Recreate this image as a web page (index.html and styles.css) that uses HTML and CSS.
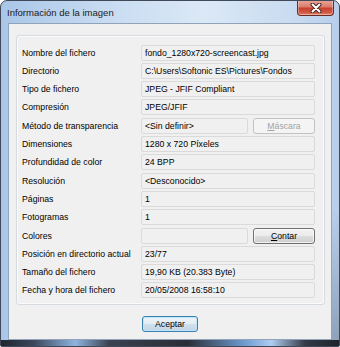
FILE: index.html
```html
<!DOCTYPE html>
<html lang="es">
<head>
<meta charset="utf-8">
<title>Información de la imagen</title>
<link rel="stylesheet" href="styles.css">
</head>
<body>
<div class="window">
  <div class="titlebar">
    <span class="title">Información de la imagen</span>
    <div class="close">
      <svg width="14" height="10" viewBox="0 0 14 10">
        <path d="M3.5 1.5 L10.5 8.5 M10.5 1.5 L3.5 8.5" stroke="#4a2a26" stroke-width="4" stroke-linecap="round"/>
        <path d="M3.5 1.5 L10.5 8.5 M10.5 1.5 L3.5 8.5" stroke="#ffffff" stroke-width="2" stroke-linecap="round"/>
      </svg>
    </div>
  </div>
  <div class="client">
    <div class="group">
      <div class="label">Nombre del fichero</div><div class="field">fondo_1280x720-screencast.jpg</div>
      <div class="label">Directorio</div><div class="field">C:\Users\Softonic ES\Pictures\Fondos</div>
      <div class="label">Tipo de fichero</div><div class="field">JPEG - JFIF Compliant</div>
      <div class="label">Compresión</div><div class="field">JPEG/JFIF</div>
      <div class="label">Método de transparencia</div>
      <div class="split"><div class="field">&lt;Sin definir&gt;</div><div class="btn disabled"><u>M</u>áscara</div></div>
      <div class="label">Dimensiones</div><div class="field">1280 x 720 Píxeles</div>
      <div class="label">Profundidad de color</div><div class="field">24 BPP</div>
      <div class="label">Resolución</div><div class="field">&lt;Desconocido&gt;</div>
      <div class="label">Páginas</div><div class="field">1</div>
      <div class="label">Fotogramas</div><div class="field">1</div>
      <div class="label">Colores</div>
      <div class="split"><div class="field"></div><div class="btn"><u>C</u>ontar</div></div>
      <div class="label">Posición en directorio actual</div><div class="field">23/77</div>
      <div class="label">Tamaño del fichero</div><div class="field">19,90 KB (20.383 Byte)</div>
      <div class="label">Fecha y hora del fichero</div><div class="field">20/05/2008 16:58:10</div>
    </div>
    <div class="footer"><div class="btn default">Aceptar</div></div>
  </div>
</div>
</body>
</html>
```

FILE: styles.css
```css
html, body {
  margin: 0;
  padding: 0;
  background: #ffffff;
}
.window {
  box-sizing: border-box;
  width: 340px;
  height: 347px;
  border: 1px solid #3f4957;
  border-radius: 7px 7px 2px 2px;
  background:
    linear-gradient(to right, #20242c 0%, #3c4a5e 10%, #8fb4e0 22%, #3a4250 32%, #2a2e36 55%, #6f9bd0 72%, #aecdf2 80%, #343a46 90%, #20242c 100%) bottom / 100% 6px no-repeat,
    linear-gradient(to bottom, rgba(255,255,255,0) 60%, rgba(60,70,90,0.35) 100%) right / 7px 100% no-repeat,
    linear-gradient(to right, #a9c6e8 0%, #c7dbf1 30%, #dbe8f6 60%, #cadcf1 85%, #b7cfec 100%);
  display: flex;
  flex-direction: column;
  font-family: "Liberation Sans", Arial, sans-serif;
  overflow: hidden;
}
.titlebar {
  height: 22px;
  display: flex;
  align-items: flex-start;
  justify-content: space-between;
}
.title {
  margin: 6px 0 0 6px;
  font-size: 9.5px;
  color: #1b1b1b;
}
.close {
  width: 37px;
  height: 16px;
  margin-right: 5px;
  margin-top: -1px;
  box-sizing: border-box;
  border: 1px solid #6d2a22;
  border-top: none;
  border-radius: 0 0 4px 4px;
  background: linear-gradient(to bottom, #e9a99a 0%, #dc7d6c 45%, #c7412f 55%, #d25a45 85%, #e08a70 100%);
  display: flex;
  align-items: center;
  justify-content: center;
  box-shadow: inset 0 0 0 1px rgba(255,255,255,0.35);
}
.client {
  flex: 1;
  margin: 0 7px 6px 7px;
  background: #f0f0f0;
  border: 1px solid #90a3b9;
  display: flex;
  flex-direction: column;
}
.group {
  margin: 11px 6px 0 7px;
  height: 270px;
  box-sizing: border-box;
  border: 1px solid #d5dbe0;
  border-radius: 3px;
  box-shadow: inset 0 0 0 1px #fbfbfb;
  padding: 8.6px 10px 0 5px;
  display: grid;
  grid-template-columns: 119px 174px;
  grid-auto-rows: 16px;
  row-gap: 2.3px;
  align-items: center;
  font-size: 8.7px;
  color: #000;
}
.label {
  white-space: nowrap;
}
.field {
  box-sizing: border-box;
  height: 16px;
  border: 1px solid #dadada;
  border-radius: 2px;
  padding: 0 3px;
  line-height: 14px;
  white-space: nowrap;
  overflow: hidden;
}
.split {
  display: flex;
  gap: 5px;
  height: 16px;
}
.split .field {
  width: 107px;
  flex: none;
}
.btn {
  box-sizing: border-box;
  flex: 1;
  height: 16px;
  border: 1px solid #707070;
  border-radius: 3px;
  background: linear-gradient(to bottom, #f2f2f2 0%, #ebebeb 50%, #dddddd 50%, #cfcfcf 100%);
  box-shadow: inset 0 0 0 1px rgba(255,255,255,0.7);
  text-align: center;
  line-height: 14px;
  font-size: 8.7px;
  color: #000;
}
.btn.disabled {
  border-color: #c2c2c2;
  background: #f4f4f4;
  color: #a3a3a3;
  box-shadow: none;
}
.btn u {
  text-decoration: underline;
}
.footer {
  display: flex;
  justify-content: center;
  padding-top: 11px;
}
.btn.default {
  flex: none;
  width: 56px;
  height: 16px;
  border-color: #3c7fb1;
  background: linear-gradient(to bottom, #eef4f9 0%, #e3ecf4 50%, #d2e0ec 50%, #c3d5e6 100%);
  box-shadow: inset 0 0 0 1px #bfe5fb;
}
```
